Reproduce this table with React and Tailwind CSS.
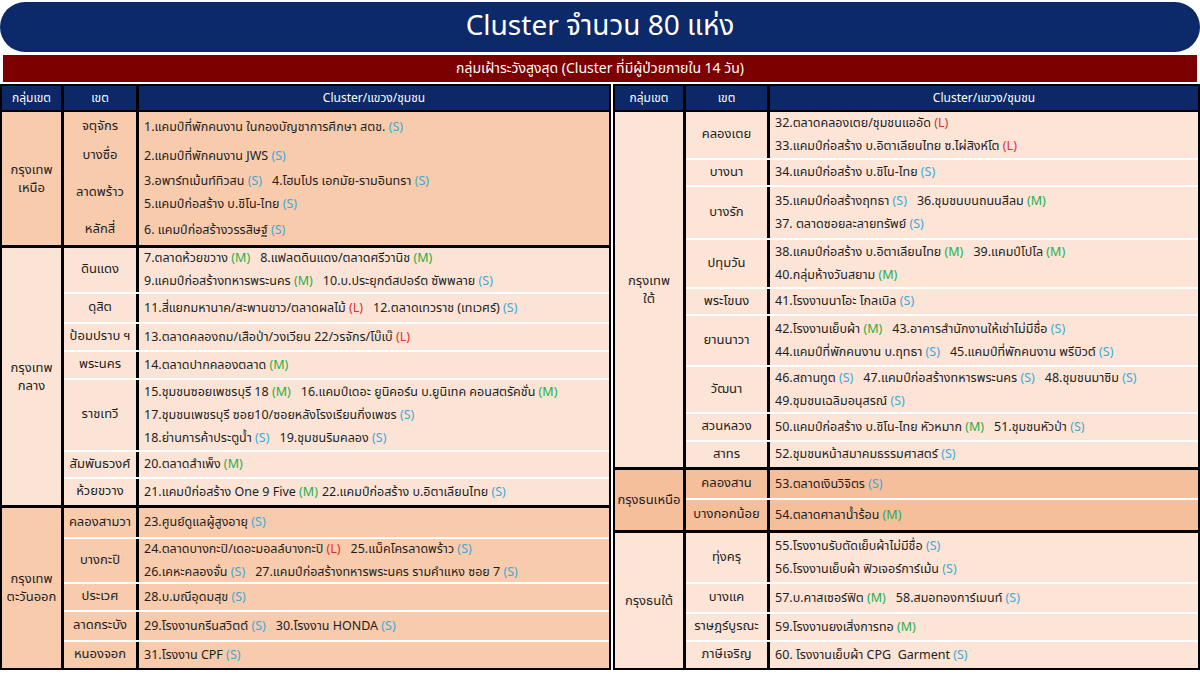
import React from "react";

const Tag = ({ t }) => {
  const color =
    t === "S" ? "text-[#3fa9d6]" : t === "M" ? "text-[#1fae4b]" : "text-[#e0302c]";
  return <span className={color}>({t})</span>;
};

// each item: [text, tag]
const leftGroups = [
  {
    name: ["กรุงเทพ", "เหนือ"],
    bg: "bg-[#f8cbad]",
    sep: false,
    rows: [
      { z: "จตุจักร", h: "h-[30px]", lines: [[["1.แคมป์ที่พักคนงาน ในกองบัญชาการศึกษา สตช.", "S"]]] },
      { z: "บางซื่อ", h: "h-[28px]", lines: [[["2.แคมป์ที่พักคนงาน JWS", "S"]]] },
      {
        z: "ลาดพร้าว",
        h: "h-[45px]",
        lines: [
          [["3.อพาร์ทเม้นท์ทิวสน", "S"], ["4.โฮมโปร เอกมัย-รามอินทรา", "S"]],
          [["5.แคมป์ก่อสร้าง บ.ชิโน-ไทย", "S"]],
        ],
      },
      { z: "หลักสี่", h: "h-[30px]", lines: [[["6. แคมป์ก่อสร้างวรรสิษฐ์", "S"]]] },
    ],
  },
  {
    name: ["กรุงเทพ", "กลาง"],
    bg: "bg-[#fbe4d5]",
    sep: true,
    rows: [
      {
        z: "ดินแดง",
        h: "h-[44px]",
        lines: [
          [["7.ตลาดห้วยขวาง", "M"], ["8.แฟลตดินแดง/ตลาดศรีวานิช", "M"]],
          [["9.แคมป์ก่อสร้างทหารพระนคร", "M"], ["10.บ.ประยุกต์สปอร์ต ซัพพลาย", "S"]],
        ],
      },
      {
        z: "ดุสิต",
        h: "h-[30px]",
        lines: [[["11.สี่แยกมหานาค/สะพานขาว/ตลาดผลไม้", "L"], ["12.ตลาดเทวราช (เทเวศร์)", "S"]]],
      },
      { z: "ป้อมปราบ ฯ", h: "h-[28px]", lines: [[["13.ตลาดคลองถม/เสือป่า/วงเวียน 22/วรจักร/โบ๊เบ๊", "L"]]] },
      { z: "พระนคร", h: "h-[28px]", lines: [[["14.ตลาดปากคลองตลาด", "M"]]] },
      {
        z: "ราชเทวี",
        h: "h-[72px]",
        lines: [
          [["15.ชุมชนซอยเพชรบุรี 18", "M"], ["16.แคมป์เดอะ ยูนิคอร์น บ.ยูนิเทค คอนสตรัคชั่น", "M"]],
          [["17.ชุมชนเพชรบุรี ซอย10/ซอยหลังโรงเรียนกิ่งเพชร", "S"]],
          [["18.ย่านการค้าประตูน้ำ", "S"], ["19.ชุมชนริมคลอง", "S"]],
        ],
      },
      { z: "สัมพันธวงศ์", h: "h-[27px]", lines: [[["20.ตลาดสำเพ็ง", "M"]]] },
      {
        z: "ห้วยขวาง",
        h: "h-[28px]",
        tight: true,
        lines: [[["21.แคมป์ก่อสร้าง One 9 Five", "M"], ["22.แคมป์ก่อสร้าง บ.อิตาเลียนไทย", "S"]]],
      },
    ],
  },
  {
    name: ["กรุงเทพ", "ตะวันออก"],
    bg: "bg-[#f8cbad]",
    sep: true,
    rows: [
      { z: "คลองสามวา", h: "h-[29px]", lines: [[["23.ศูนย์ดูแลผู้สูงอายุ", "S"]]] },
      {
        z: "บางกะปิ",
        h: "h-[45px]",
        lines: [
          [["24.ตลาดบางกะปิ/เดอะมอลล์บางกะปิ", "L"], ["25.แม็คโครลาดพร้าว", "S"]],
          [["26.เคหะคลองจั่น", "S"], ["27.แคมป์ก่อสร้างทหารพระนคร รามคำแหง ซอย 7", "S"]],
        ],
      },
      { z: "ประเวศ", h: "h-[28px]", lines: [[["28.บ.มณีอุดมสุข", "S"]]] },
      {
        z: "ลาดกระบัง",
        h: "h-[30px]",
        lines: [[["29.โรงงานกรีนสวิตต์", "S"], ["30.โรงงาน HONDA", "S"]]],
      },
      { z: "หนองจอก", h: "h-[28px]", lines: [[["31.โรงงาน CPF", "S"]]] },
    ],
  },
];

const rightGroups = [
  {
    name: ["กรุงเทพ", "ใต้"],
    bg: "bg-[#fce4d6]",
    sep: true,
    rows: [
      {
        z: "คลองเตย",
        h: "h-[46px]",
        lines: [
          [["32.ตลาดคลองเตย/ชุมชนแออัด", "L"]],
          [["33.แคมป์ก่อสร้าง บ.อิตาเลียนไทย ซ.ไผ่สิงห์โต", "L"]],
        ],
      },
      { z: "บางนา", h: "h-[27px]", lines: [[["34.แคมป์ก่อสร้าง บ.ชิโน-ไทย", "S"]]] },
      {
        z: "บางรัก",
        h: "h-[53px]",
        lines: [
          [["35.แคมป์ก่อสร้างฤทธา", "S"], ["36.ชุมชนบนถนนสีลม", "M"]],
          [["37. ตลาดซอยละลายทรัพย์", "S"]],
        ],
      },
      {
        z: "ปทุมวัน",
        h: "h-[49px]",
        lines: [
          [["38.แคมป์ก่อสร้าง บ.อิตาเลียนไทย", "M"], ["39.แคมป์โปโล", "M"]],
          [["40.กลุ่มห้างวันสยาม", "M"]],
        ],
      },
      { z: "พระโขนง", h: "h-[27px]", lines: [[["41.โรงงานนาโอะ โกลเบิล", "S"]]] },
      {
        z: "ยานนาวา",
        h: "h-[51px]",
        lines: [
          [["42.โรงงานเย็บผ้า", "M"], ["43.อาคารสำนักงานให้เช่าไม่มีชื่อ", "S"]],
          [["44.แคมป์ที่พักคนงาน บ.ฤทธา", "S"], ["45.แคมป์ที่พักคนงาน พรีบิวต์", "S"]],
        ],
      },
      {
        z: "วัฒนา",
        h: "h-[47px]",
        lines: [
          [["46.สถานทูต", "S"], ["47.แคมป์ก่อสร้างทหารพระนคร", "S"], ["48.ชุมชนมาซิม", "S"]],
          [["49.ชุมชนเฉลิมอนุสรณ์", "S"]],
        ],
      },
      {
        z: "สวนหลวง",
        h: "h-[28px]",
        lines: [[["50.แคมป์ก่อสร้าง บ.ชิโน-ไทย หัวหมาก", "M"], ["51.ชุมชนหัวป่า", "S"]]],
      },
      { z: "สาทร", h: "h-[27px]", lines: [[["52.ชุมชนหน้าสมาคมธรรมศาสตร์", "S"]]] },
    ],
  },
  {
    name: ["กรุงธนเหนือ"],
    bg: "bg-[#f6bf9c]",
    sep: true,
    rows: [
      { z: "คลองสาน", h: "h-[28px]", lines: [[["53.ตลาดเงินวิจิตร", "S"]]] },
      { z: "บางกอกน้อย", h: "h-[32px]", lines: [[["54.ตลาดศาลาน้ำร้อน", "M"]]] },
    ],
  },
  {
    name: ["กรุงธนใต้"],
    bg: "bg-[#fce4d6]",
    sep: true,
    rows: [
      {
        z: "ทุ่งครุ",
        h: "h-[49px]",
        lines: [
          [["55.โรงงานรับตัดเย็บผ้าไม่มีชื่อ", "S"]],
          [["56.โรงงานเย็บผ้า ฟิวเจอร์การ์เม้น", "S"]],
        ],
      },
      {
        z: "บางแค",
        h: "h-[30px]",
        lines: [[["57.บ.คาสเซอร์ฟิต", "M"], ["58.สมอทองการ์เมนท์", "S"]]],
      },
      { z: "ราษฎร์บูรณะ", h: "h-[28px]", lines: [[["59.โรงงานยงเสิ่งการทอ", "M"]]] },
      { z: "ภาษีเจริญ", h: "h-[28px]", lines: [[["60. โรงงานเย็บผ้า CPG  Garment", "S"]]] },
    ],
  },
];

function Group({ g, groupW, zoneW, last }) {
  return (
    <div className={`flex ${g.bg} ${last ? "" : "border-b-[3px] border-black"}`}>
      <div
        className={`${groupW} shrink-0 border-r-[3px] border-black flex flex-col items-center justify-center text-[13px] leading-[18px]`}
      >
        {g.name.map((n) => (
          <span key={n}>{n}</span>
        ))}
      </div>
      <div className="flex-1 flex flex-col">
        {g.rows.map((r, i) => (
          <div
            key={r.z}
            className={`flex ${r.h} ${g.sep && i > 0 ? "border-t-2 border-white" : ""}`}
          >
            <div
              className={`${zoneW} shrink-0 border-r-[3px] border-black flex items-center justify-center text-[13px] whitespace-nowrap`}
            >
              {r.z}
            </div>
            <div className="flex-1 flex flex-col justify-center pl-[5px] text-[12.5px] leading-[23px] whitespace-pre">
              {r.lines.map((line, li) => (
                <div key={li}>
                  {line.map(([txt, tag], k) => (
                    <span key={k} className={k > 0 ? (r.tight ? "ml-[4px]" : "ml-[10px]") : ""}>
                      {txt} <Tag t={tag} />
                    </span>
                  ))}
                </div>
              ))}
            </div>
          </div>
        ))}
      </div>
    </div>
  );
}

function Table({ groups, groupW, zoneW, className }) {
  return (
    <div className={`flex flex-col border-2 border-black ${className}`}>
      <div className="flex h-[26px] bg-[#0c2866] text-white text-[12px] border-b-2 border-black">
        <div className={`${groupW} shrink-0 border-r-[3px] border-black flex items-center justify-center`}>
          กลุ่มเขต
        </div>
        <div className={`${zoneW} shrink-0 border-r-[3px] border-black flex items-center justify-center`}>
          เขต
        </div>
        <div className="flex-1 flex items-center justify-center">Cluster/แขวง/ชุมชน</div>
      </div>
      {groups.map((g, i) => (
        <Group key={i} g={g} groupW={groupW} zoneW={zoneW} last={i === groups.length - 1} />
      ))}
    </div>
  );
}

export default function App() {
  return (
    <div
      className="w-[1200px] h-[675px] bg-white overflow-hidden text-[#1e1e1e]"
      style={{ fontFamily: '"Noto Sans Thai", "Noto Sans", "Liberation Sans", sans-serif' }}
    >
      <div className="mt-[2px] h-[50px] rounded-[26px] bg-[#0c2a6a] flex items-center justify-center text-white text-[28px]">
        Cluster จำนวน 80 แห่ง
      </div>
      <div className="mt-[3px] mx-[3px] h-[27px] bg-[#7d0000] flex items-center justify-center text-white text-[14px]">
        กลุ่มเฝ้าระวังสูงสุด (Cluster ที่มีผู้ป่วยภายใน 14 วัน)
      </div>
      <div className="mt-[2px] flex gap-[2px]">
        <Table groups={leftGroups} groupW="w-[62px]" zoneW="w-[75px]" className="w-[611px]" />
        <Table groups={rightGroups} groupW="w-[71px]" zoneW="w-[84px]" className="flex-1" />
      </div>
    </div>
  );
}
